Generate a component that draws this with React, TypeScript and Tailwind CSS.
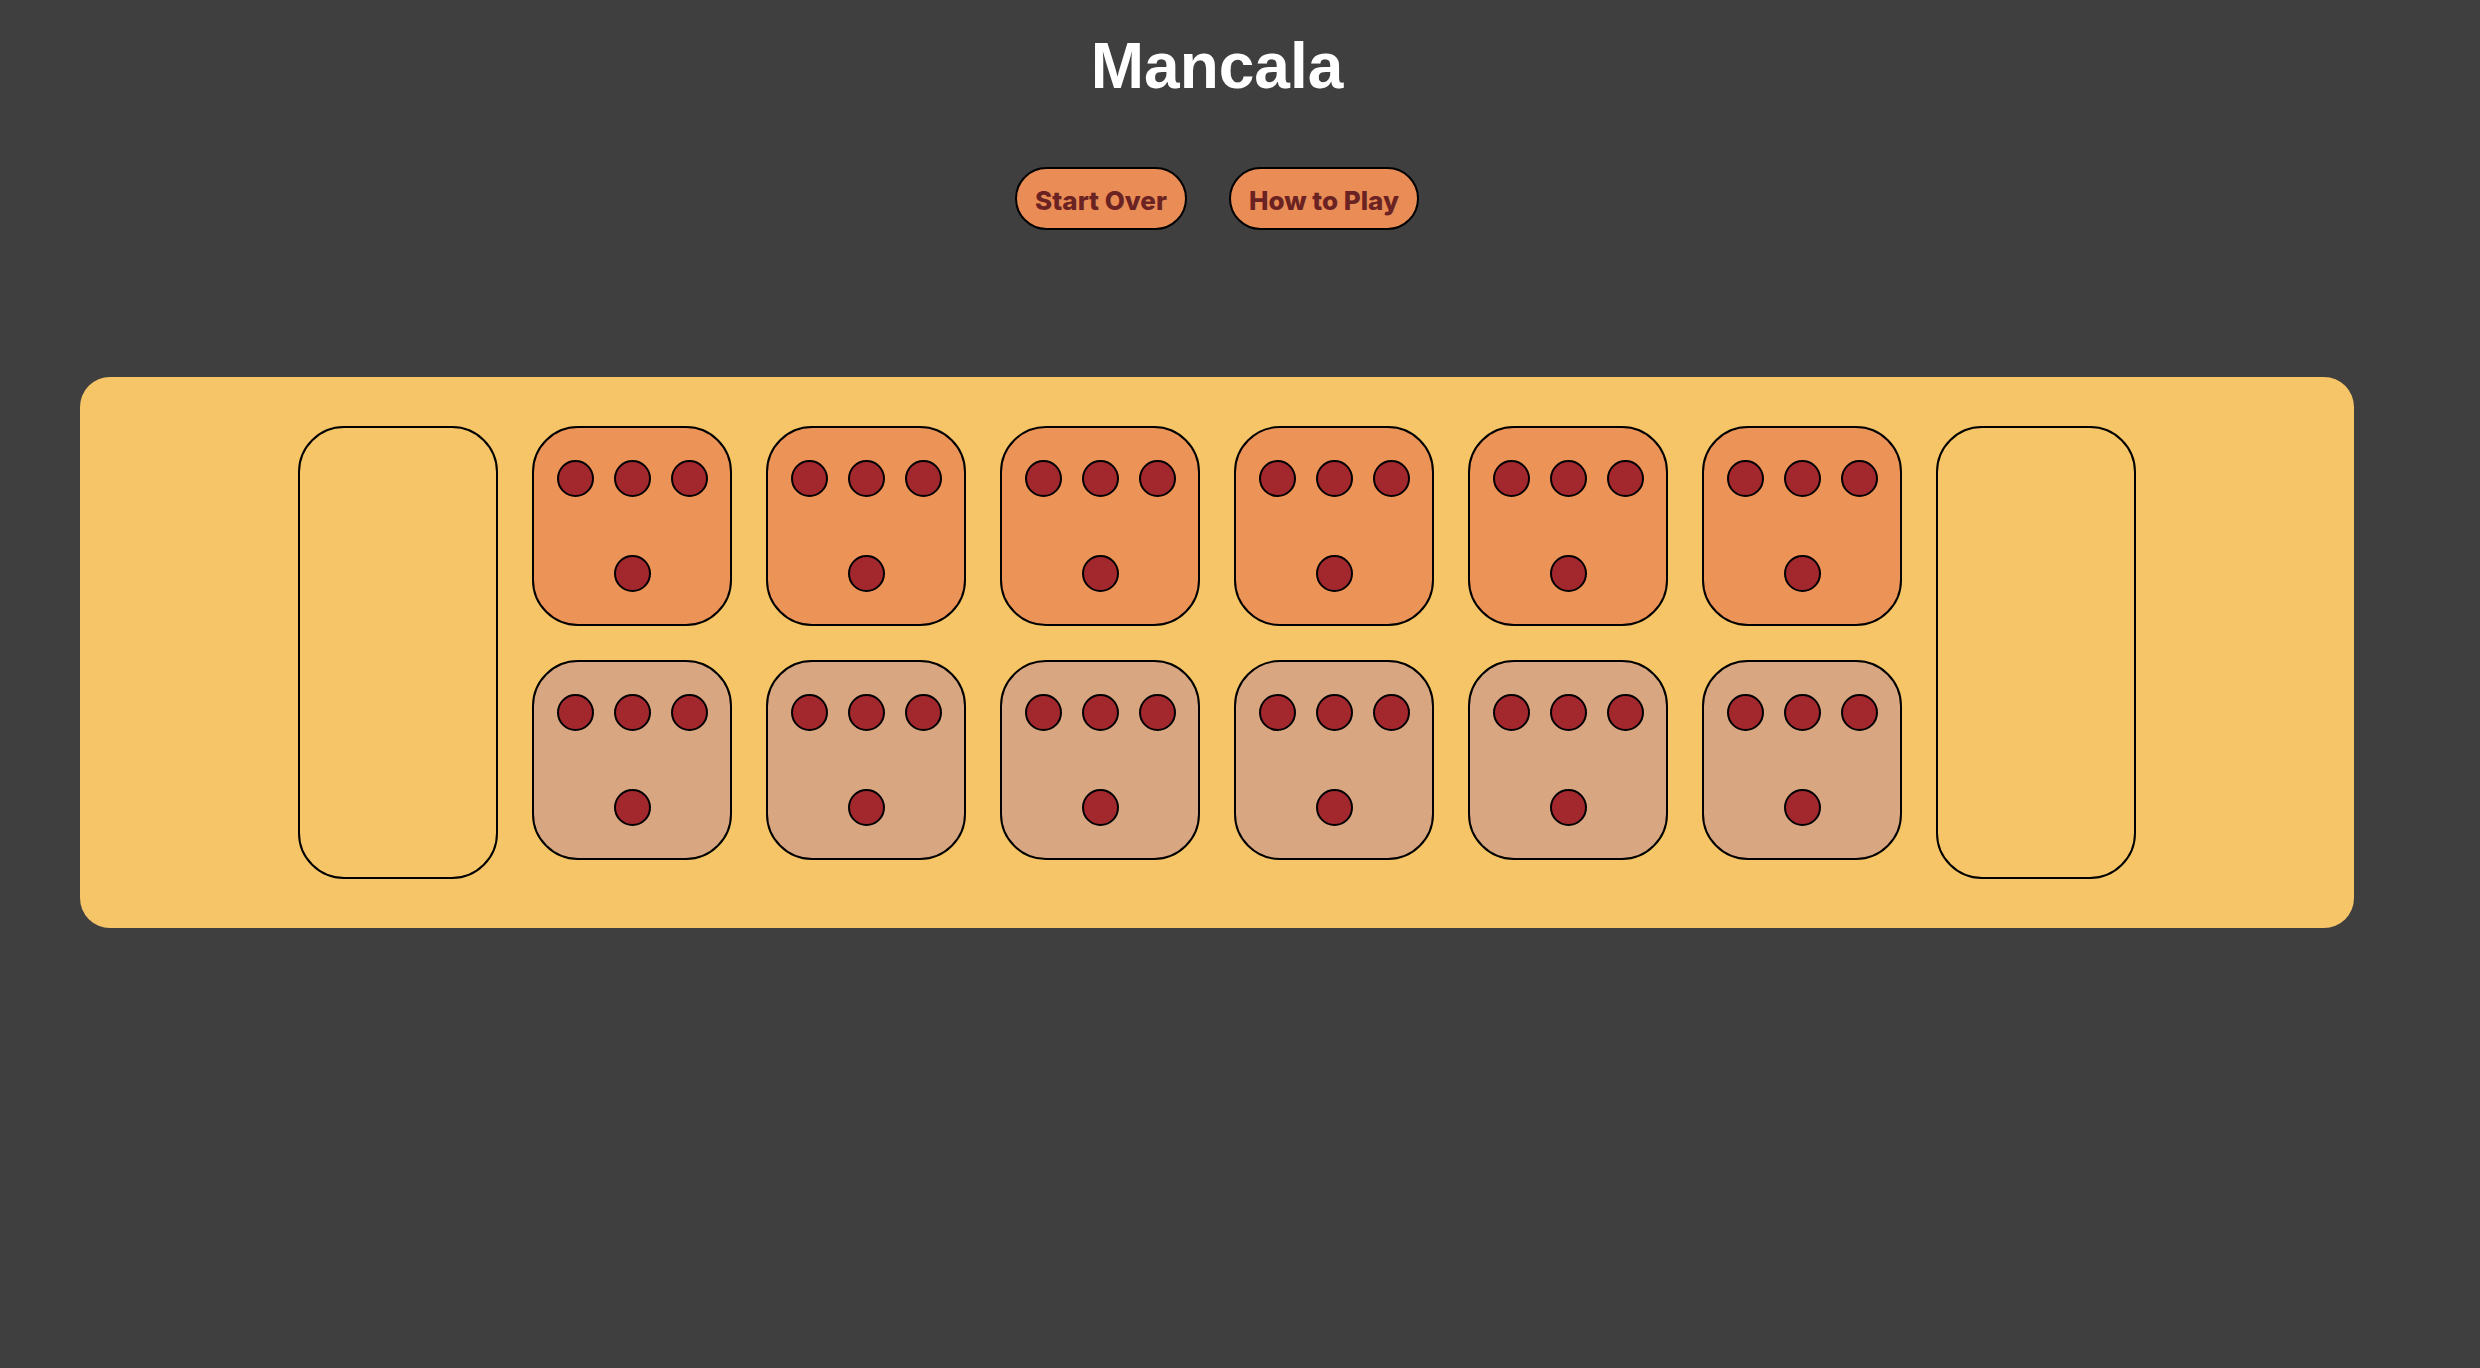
import React from "react"

const PITS = 6
const STONES = 4

function Stone() {
  return <div className="h-[37px] w-[37px] rounded-full border-2 border-black bg-[#a2282e]" />
}

function Pit({ top }: { top: boolean }) {
  return (
    <div
      className={
        top
          ? "flex h-[200px] w-[200px] flex-col items-center justify-between rounded-[46px] border-2 border-black bg-[#ec9357] py-[32px]"
          : "flex h-[200px] w-[200px] flex-col items-center justify-between rounded-[46px] border-2 border-black bg-[#d9a682] py-[32px]"
      }
    >
      <div className="flex gap-[20px]">
        {Array.from({ length: Math.min(3, STONES) }).map((_, i) => (
          <Stone key={i} />
        ))}
      </div>
      <div className="flex gap-[20px]">
        {Array.from({ length: Math.max(0, STONES - 3) }).map((_, i) => (
          <Stone key={i} />
        ))}
      </div>
    </div>
  )
}

function Store() {
  return <div className="h-[453px] w-[200px] rounded-[46px] border-2 border-black" />
}

export default function App() {
  return (
    <div className="min-h-screen w-full bg-[#3f3f3f]">
      <div className="flex w-[2434px] flex-col items-center">
        <h1 className="mt-[34px] text-[64px] font-bold leading-none text-white [font-family:'Liberation_Sans',Arial,sans-serif]">
          Mancala
        </h1>

        <div className="mt-[69px] flex gap-[42px] [font-family:Inter,'Noto_Sans',sans-serif]">
          <button className="h-[63px] w-[172px] rounded-full border-2 border-black bg-[#e98c55] pt-[3px] text-[26px] font-extrabold text-[#6b2222]">
            Start Over
          </button>
          <button className="h-[63px] w-[190px] rounded-full border-2 border-black bg-[#e98c55] pt-[3px] text-[26px] font-extrabold text-[#6b2222]">
            How to Play
          </button>
        </div>

        <div className="mt-[147px] flex w-[2274px] items-start justify-center gap-[34px] rounded-[30px] bg-[#f6c567] py-[49px]">
          <Store />
          <div className="grid grid-cols-6 gap-[34px]">
            {Array.from({ length: PITS }).map((_, i) => (
              <Pit key={"t" + i} top />
            ))}
            {Array.from({ length: PITS }).map((_, i) => (
              <Pit key={"b" + i} top={false} />
            ))}
          </div>
          <Store />
        </div>
      </div>
    </div>
  )
}
